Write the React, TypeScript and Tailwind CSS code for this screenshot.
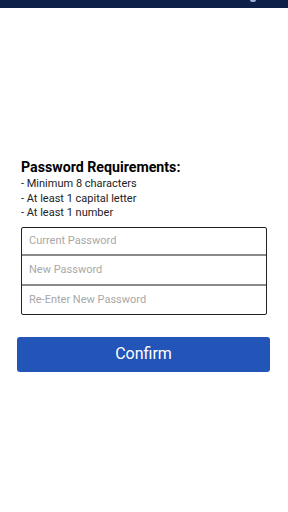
import React from "react";

export default function App() {
  return (
    <div className="w-[288px] h-[512px] bg-white flex flex-col" style={{ fontFamily: "Roboto, 'Liberation Sans', sans-serif" }}>
      <div className="h-[8px] bg-[#0b2148] relative shrink-0">
        <div className="absolute left-[250px] top-0 w-[6px] h-[2px] rounded-b-full bg-[#9fb0d0]" />
      </div>
      <div className="pt-[149px] px-[21px]">
        <h2 className="text-[14.2px] font-bold text-black leading-[20px]">Password Requirements:</h2>
        <ul className="text-[11px] text-[#222] leading-[14.5px]">
          <li>- Minimum 8 characters</li>
          <li>- At least 1 capital letter</li>
          <li>- At least 1 number</li>
        </ul>
        <div className="mt-[6px] w-[246px] border-[1.5px] border-[#222] rounded-[2px] flex flex-col">
          <input
            placeholder="Current Password"
            className="h-[28px] px-[7px] text-[11px] outline-none placeholder:text-[#a8a8a8] border-b-2 border-[#8a8a8a]"
          />
          <input
            placeholder="New Password"
            className="h-[30px] px-[7px] text-[11px] outline-none placeholder:text-[#a8a8a8] border-b-2 border-[#8a8a8a]"
          />
          <input
            placeholder="Re-Enter New Password"
            className="h-[28px] px-[7px] text-[11px] outline-none placeholder:text-[#a8a8a8]"
          />
        </div>
      </div>
      <div className="px-[17px] mt-[22px]">
        <button className="w-[253px] h-[35px] rounded-[3px] bg-[#2354b8] text-white text-[16px] flex items-center justify-center">
          Confirm
        </button>
      </div>
    </div>
  );
}
